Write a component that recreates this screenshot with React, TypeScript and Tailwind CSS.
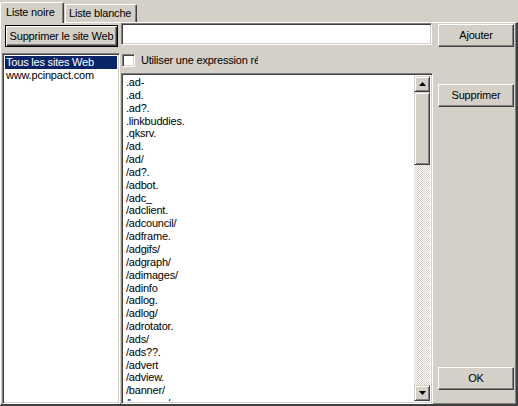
const raised =
  "border border-t-white border-l-white border-r-[#404040] border-b-[#404040] shadow-[inset_-1px_-1px_#808080] bg-[#d4d0c8]";
const sunken =
  "border border-t-[#808080] border-l-[#808080] border-r-white border-b-white shadow-[inset_1px_1px_#404040,inset_-1px_-1px_#d4d0c8]";
const scrollBtn =
  "flex h-[16px] w-[16px] shrink-0 items-center justify-center border border-t-[#d4d0c8] border-l-[#d4d0c8] border-r-[#404040] border-b-[#404040] shadow-[inset_1px_1px_#fff,inset_-1px_-1px_#808080] bg-[#d4d0c8]";

const patterns = [
  ".ad-",
  ".ad.",
  ".ad?.",
  ".linkbuddies.",
  ".qksrv.",
  "/ad.",
  "/ad/",
  "/ad?.",
  "/adbot.",
  "/adc_",
  "/adclient.",
  "/adcouncil/",
  "/adframe.",
  "/adgifs/",
  "/adgraph/",
  "/adimages/",
  "/adinfo",
  "/adlog.",
  "/adlog/",
  "/adrotator.",
  "/ads/",
  "/ads??.",
  "/advert",
  "/adview.",
  "/banner/",
  "/banners/",
];

function Arrow({ up }: { up?: boolean }) {
  return (
    <svg width="7" height="4" viewBox="0 0 7 4">
      {up ? <path d="M3.5 0 L7 4 L0 4 Z" fill="#000" /> : <path d="M0 0 L7 0 L3.5 4 Z" fill="#000" />}
    </svg>
  );
}

export default function App() {
  return (
    <div className="flex h-[406px] w-[518px] flex-col overflow-hidden bg-[#d4d0c8] font-['Liberation_Sans',Arial,sans-serif] text-[11px] tracking-[-0.2px] text-black">
      {/* tabs */}
      <div className="flex h-[22px] shrink-0 items-end">
        <div className="relative z-10 -mb-px flex h-[21px] w-[64px] items-start rounded-tl-[2px] rounded-tr-[2px] border-t border-l border-r border-t-white border-l-white border-r-[#404040] bg-[#d4d0c8] pl-[5px] pt-[3px] leading-[13px] shadow-[inset_-1px_0_#808080]">
          Liste noire
        </div>
        <div className="ml-px flex h-[18px] w-[72px] items-start rounded-tl-[2px] rounded-tr-[2px] border-t border-l border-r border-t-white border-l-white border-r-[#404040] bg-[#d4d0c8] pl-[3px] pt-[2px] leading-[13px] shadow-[inset_-1px_0_#808080]">
          Liste blanche
        </div>
      </div>

      {/* panel */}
      <div className="flex min-h-0 flex-1 border-t border-l border-t-white border-l-white border-r-2 border-b-2 border-r-[#404040] border-b-[#404040] pl-px shadow-[inset_-1px_-1px_#808080]">
        {/* left column */}
        <div className="flex w-[118px] shrink-0 flex-col">
          <button className="ml-[3px] mt-[2px] h-[22px] w-[113px] border border-black bg-[#d4d0c8] leading-[13px] shadow-[inset_1px_1px_#fff,inset_-1px_-1px_#404040,inset_-2px_-2px_#808080]">
            Supprimer le site Web
          </button>
          <div className={`mt-[6px] flex-1 bg-white p-[2px] ${sunken}`}>
            <div className="bg-[#0a246a] pl-[1px] leading-[13px] text-white">Tous les sites Web</div>
            <div className="pl-[1px] leading-[13px]">www.pcinpact.com</div>
          </div>
        </div>

        {/* middle column */}
        <div className="ml-px flex w-[312px] shrink-0 flex-col">
          <div className={`h-[22px] w-[311px] bg-white ${sunken}`} />
          <div className="ml-px mt-[9px] flex h-[13px] items-center">
            <div className={`h-[13px] w-[13px] shrink-0 bg-white ${sunken}`} />
            <div className="ml-[6px] w-[117px] overflow-hidden whitespace-nowrap leading-[13px]">
              Utiliser une expression régulière
            </div>
          </div>
          <div className={`mt-[6px] flex min-h-0 flex-1 bg-white p-[2px] ${sunken}`}>
            <div className="min-w-0 flex-1 overflow-hidden pl-[2px]">
              {patterns.map((p) => (
                <div key={p} className="leading-[12.85px] whitespace-nowrap">
                  {p}
                </div>
              ))}
            </div>
            <div className="flex w-[16px] shrink-0 flex-col">
              <div className={scrollBtn}>
                <Arrow up />
              </div>
              <div className="h-[73px] w-[16px] shrink-0 border border-t-[#d4d0c8] border-l-[#d4d0c8] border-r-[#404040] border-b-[#404040] bg-[#d4d0c8] shadow-[inset_1px_1px_#fff,inset_-1px_-1px_#808080]" />
              <div className="flex-1 bg-[repeating-conic-gradient(#d4d0c8_0_25%,#ffffff_0_50%)] bg-[length:2px_2px]" />
              <div className={scrollBtn}>
                <Arrow />
              </div>
            </div>
          </div>
        </div>

        {/* right column */}
        <div className="ml-[5px] flex w-[76px] shrink-0 flex-col">
          <button className={`mt-px h-[23px] w-[76px] leading-[13px] ${raised}`}>Ajouter</button>
          <button className={`mt-[37px] h-[23px] w-[76px] leading-[13px] ${raised}`}>Supprimer</button>
          <button className={`mb-[14px] mt-auto h-[23px] w-[76px] leading-[13px] ${raised}`}>OK</button>
        </div>
      </div>
    </div>
  );
}
